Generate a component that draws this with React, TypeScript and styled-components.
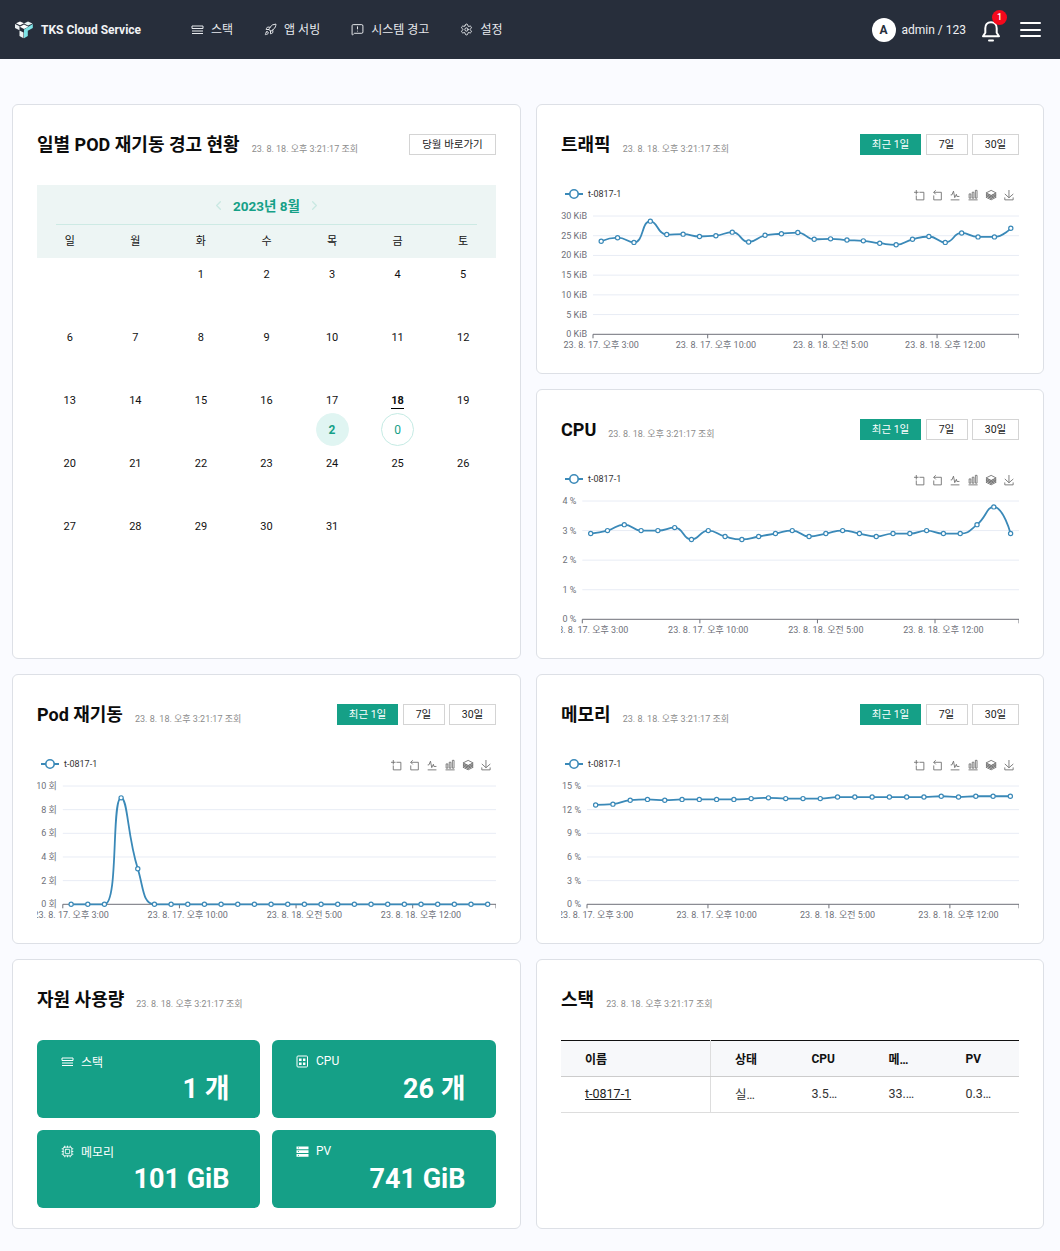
import React from 'react'
import styled, { createGlobalStyle } from 'styled-components'
import { Cpu, MessageSquareWarning, Rocket, Settings, ChevronLeft, ChevronRight } from 'lucide-react'

const TEAL = '#15a087'
const LINE = '#3a89b8'
const AXIS = '#6e7079'
const FONT = `Roboto, "Noto Sans CJK KR", "Noto Sans", sans-serif`
const VIEWED_AT = '23. 8. 18. 오후 3:21:17 조회'
const X_LABELS = ['23. 8. 17. 오후 3:00', '23. 8. 17. 오후 10:00', '23. 8. 18. 오전 5:00', '23. 8. 18. 오후 12:00']

const GlobalStyle = createGlobalStyle`
  html, body {
    margin: 0;
    padding: 0;
    background: #fafbff;
    font-family: ${FONT};
    color: #111;
  }
  * {
    box-sizing: border-box;
  }
`

// ---- chart (echarts 모양 그대로) ----

type Point = [number, number]

const smoothPath = (pts: Point[], smooth = 0.5) => {
  let d = `M${pts[0][0]},${pts[0][1]}`
  let cp0: Point = pts[0]
  const clamp = (v: number, a: number, b: number) => Math.max(Math.min(v, Math.max(a, b)), Math.min(a, b))
  pts.forEach((p, i) => {
    if (i === 0) return
    const prev = pts[i - 1]
    const next = pts[i + 1]
    if (!next) {
      d += `C${cp0[0]},${cp0[1]} ${p[0]},${p[1]} ${p[0]},${p[1]}`
      return
    }
    const lenPrev = Math.hypot(p[0] - prev[0], p[1] - prev[1])
    const lenNext = Math.hypot(next[0] - p[0], next[1] - p[1])
    const ratio = lenNext / (lenNext + lenPrev)
    let vx = next[0] - prev[0]
    let vy = next[1] - prev[1]
    let c1x = clamp(p[0] + vx * smooth * ratio, next[0], p[0])
    let c1y = clamp(p[1] + vy * smooth * ratio, next[1], p[1])
    vx = c1x - p[0]
    vy = c1y - p[1]
    const c0x = clamp(p[0] - (vx * lenPrev) / lenNext, prev[0], p[0])
    const c0y = clamp(p[1] - (vy * lenPrev) / lenNext, prev[1], p[1])
    vx = p[0] - c0x
    vy = p[1] - c0y
    c1x = p[0] + (vx * lenNext) / lenPrev
    c1y = p[1] + (vy * lenNext) / lenPrev
    d += `C${cp0[0]},${cp0[1]} ${c0x},${c0y} ${p[0]},${p[1]}`
    cp0 = [c1x, c1y]
  })
  return d
}

const TOOL_ICONS = [
  'M0,13.5h26.9 M13.5,26.9V0 M32.1,13.5H58V58H13.5 V32.1',
  'M22,1.4L9.9,13.5l12.3,12.3 M10.3,13.5H54.9v44.6 H10.3v-26',
  'M4.1,28.9h7.1l9.3-22l7.4,38l9.7-19.7l3,12.8h14.9M4.1,58h51.4',
  'M6.7,22.9h10V48h-10V22.9zM24.9,13h10v35h-10V13zM43.2,2h10v46h-10V2zM3.1,58h53.7',
  'M8.2,38.4l-8.4,4.1l30.6,15.3L60,42.5l-8.1-4.1l-21.5,11L8.2,38.4z M51.9,30l-8.1,4.2l-13.4,6.9l-13.9-6.9L8.2,30l-8.4,4.2l8.4,4.2l22.2,11l21.5-11l8.1-4.2L51.9,30z M51.9,21.7l-8.1,4.2L35.7,30l-5.3,2.8L24.9,30l-8.4-4.1l-8.3-4.2l-8.4,4.2L8.2,30l8.3,4.2l13.9,6.9l13.4-6.9l8.1-4.2l8.1-4.1L51.9,21.7zM30.4,2.2L-0.2,17.5l8.4,4.1l8.3,4.2l8.4,4.2l5.5,2.7l5.3-2.7l8.1-4.2l8.1-4.2l8.1-4.1L30.4,2.2z',
  'M4.7,22.9L29.3,45.5L54.7,23.4M4.6,43.6L4.6,58L53.8,58L53.8,43.6M29.2,45.1L29.2,0',
]

const CHART_TOP = 32
const CHART_BOTTOM = 150.3

type ChartProps = {
  width: number
  left: number
  max: number
  step: number
  unit: string
  data: number[]
}

const Chart = ({ width, left, max, step, unit, data }: ChartProps) => {
  const band = (width - left) / data.length
  const yOf = (v: number) => CHART_BOTTOM - (v / max) * (CHART_BOTTOM - CHART_TOP)
  const pts = data.map((v, i): Point => [left + band * (i + 0.5), yOf(v)])
  const ticks: number[] = []
  for (let v = 0; v <= max; v += step) ticks.push(v)

  return (
    <ChartSvg width={width} height={176} viewBox={`0 0 ${width} 176`}>
      <line x1={4} x2={22} y1={10} y2={10} stroke={LINE} strokeWidth={2} />
      <circle cx={13} cy={10} r={4.2} fill="#fff" stroke={LINE} strokeWidth={1.6} />
      <text x={27} y={13} fontSize={9} fill="#333">t-0817-1</text>
      {TOOL_ICONS.map((d, i) => (
        <path
          key={i}
          d={d}
          transform={`translate(${width - 105 + i * 18},6) scale(0.17)`}
          fill="none"
          stroke="#6a6a6a"
          strokeWidth={5}
        />
      ))}
      {ticks.map((v) => (
        <g key={v}>
          {v > 0 && <line x1={left} x2={width} y1={yOf(v)} y2={yOf(v)} stroke="#e8ecf5" />}
          <text x={left - 6} y={yOf(v) + 3} fontSize={9} fill={AXIS} textAnchor="end">
            {v} {unit}
          </text>
        </g>
      ))}
      <line x1={left} x2={width} y1={CHART_BOTTOM} y2={CHART_BOTTOM} stroke={AXIS} />
      {[0, 7, 14, 21, data.length].map((i) => (
        <line key={i} x1={left + band * i} x2={left + band * i} y1={CHART_BOTTOM} y2={CHART_BOTTOM + 4} stroke={AXIS} />
      ))}
      {X_LABELS.map((label, i) => (
        <text key={label} x={left + band * (i * 7 + 0.5)} y={CHART_BOTTOM + 14} fontSize={9} fill={AXIS} textAnchor="middle">
          {label}
        </text>
      ))}
      <path d={smoothPath(pts)} fill="none" stroke={LINE} strokeWidth={1.8} />
      {pts.map(([x, y], i) => (
        <circle key={i} cx={x} cy={y} r={2.1} fill="#fff" stroke={LINE} strokeWidth={1.2} />
      ))}
    </ChartSvg>
  )
}

// ---- icons ----

const StackIcon = () => (
  <svg width="13" height="13" viewBox="0 0 13 13" fill="none" stroke="currentColor" strokeWidth="1">
    <path d="M1 3h11M1 5.5h11M1 8h11M1 10.5h11" />
    <path d="M1 3v2.5M12 3v2.5" />
  </svg>
)

const CpuBoxIcon = () => (
  <svg width="13" height="13" viewBox="0 0 13 13" fill="none" stroke="currentColor" strokeWidth="1">
    <rect x="1" y="1" width="10.5" height="11" rx="1" />
    <path d="M3 3.5h2.6v2.5H3zM3 7.5h2.6V10H3zM7 3.5h2.4v2.5H7zM7 7.5h2.4V10H7z" fill="currentColor" stroke="none" />
  </svg>
)

const ServerIcon = () => (
  <svg width="13" height="13" viewBox="0 0 13 13" fill="currentColor">
    <path d="M0.5 1.5h12v2.8h-12zM0.5 5.2h12V8h-12zM0.5 8.9h12v2.8h-12z" />
    <path d="M2 2.5h1v.8H2zM2 6.2h1V7H2zM2 9.9h1v.8H2z" fill={TEAL} />
  </svg>
)

const Logo = () => (
  <svg width="20" height="20" viewBox="0 0 20 20">
    <path d="M6 1.5l4 1.8-4 2-4-2z" fill="#fff" />
    <path d="M14 1.5l4.5 2-4.5 2-4-2z" fill="#e8f4f4" />
    <path d="M1 4l4.5 2.2v4L1 8z" fill="#e9eef0" />
    <path d="M10 4.5l4.5 2.2L10 9 5.8 6.7z" fill="#fff" />
    <path d="M5.5 10.5l4 2v5.8l-4-2.2z" fill="#eef2f2" />
    <path d="M10 9.5v8.8l3.8-2.2v-5.4l5-2.6V4l-4 2.6z" fill="#7fe3e6" />
  </svg>
)

const Bell = () => (
  <svg width="22" height="24" viewBox="0 0 22 24" fill="none" stroke="#fff" strokeWidth="2" strokeLinejoin="round" strokeLinecap="round">
    <path d="M11 3.2c-3.8 0-5.7 2.8-5.7 6v4.6l-2.3 3.4h16l-2.3-3.4V9.2c0-3.2-1.9-6-5.7-6z" />
    <path d="M9 21.5h4" />
  </svg>
)

// ---- data ----

const TRAFFIC = [23.6, 24.5, 23.3, 28.7, 25.3, 25.4, 24.8, 25, 25.9, 23.4, 25.1, 25.5, 25.8, 24.1, 24.2, 23.9, 23.7, 23.1, 22.7, 24.1, 24.8, 23.3, 25.7, 24.7, 24.7, 26.9]
const CPU = [2.9, 3, 3.2, 3, 3, 3.1, 2.7, 3, 2.8, 2.7, 2.8, 2.9, 3, 2.8, 2.9, 3, 2.9, 2.8, 2.9, 2.9, 3, 2.9, 2.9, 3.2, 3.8, 2.9]
const POD = [0, 0, 0, 9, 3, 0, 0, 0, 0, 0, 0, 0, 0, 0, 0, 0, 0, 0, 0, 0, 0, 0, 0, 0, 0, 0]
const MEMORY = [12.6, 12.7, 13.2, 13.3, 13.2, 13.3, 13.3, 13.3, 13.3, 13.4, 13.5, 13.4, 13.4, 13.4, 13.6, 13.6, 13.6, 13.6, 13.6, 13.6, 13.7, 13.6, 13.7, 13.7, 13.7]

const NAV = [
  { label: '스택', icon: <StackIcon /> },
  { label: '앱 서빙', icon: <Rocket size={13} strokeWidth={1.8} /> },
  { label: '시스템 경고', icon: <MessageSquareWarning size={13} strokeWidth={1.8} /> },
  { label: '설정', icon: <Settings size={13} strokeWidth={1.8} /> },
]

const WEEKDAYS = ['일', '월', '화', '수', '목', '금', '토']
const CELLS: (number | null)[] = [null, null, ...Array.from({ length: 31 }, (_, i) => i + 1)]
const COUNTS: Record<number, { count: number; filled: boolean }> = {
  17: { count: 2, filled: true },
  18: { count: 0, filled: false },
}

const STATS = [
  { label: '스택', value: '1 개', icon: <StackIcon /> },
  { label: 'CPU', value: '26 개', icon: <CpuBoxIcon /> },
  { label: '메모리', value: '101 GiB', icon: <Cpu size={13} strokeWidth={1.6} /> },
  { label: 'PV', value: '741 GiB', icon: <ServerIcon /> },
]

const PeriodTabs = () => (
  <Tabs>
    <Tab $active $width={61}>최근 1일</Tab>
    <Tab $width={42}>7일</Tab>
    <Tab $width={47}>30일</Tab>
  </Tabs>
)

const CardHead = ({ title, children }: { title: string; children?: React.ReactNode }) => (
  <Head>
    <TitleGroup>
      <Title>{title}</Title>
      <Viewed>{VIEWED_AT}</Viewed>
    </TitleGroup>
    {children}
  </Head>
)

export default function App() {
  return (
    <>
      <GlobalStyle />
      <TopBar>
        <Brand>
          <Logo />
          <BrandName>TKS Cloud Service</BrandName>
        </Brand>
        <Nav>
          {NAV.map(({ label, icon }) => (
            <NavItem key={label}>
              {icon}
              <NavText>{label}</NavText>
            </NavItem>
          ))}
        </Nav>
        <UserArea>
          <Avatar>A</Avatar>
          <UserName>admin / 123</UserName>
          <BellWrap>
            <Bell />
            <Badge>1</Badge>
          </BellWrap>
          <Burger>
            <i />
            <i />
            <i />
          </Burger>
        </UserArea>
      </TopBar>
      <Main>
        <CalendarCard>
          <CardHead title="일별 POD 재기동 경고 현황">
            <GhostButton>당월 바로가기</GhostButton>
          </CardHead>
          <CalendarHead>
            <MonthRow>
              <ChevronLeft size={15} color="#c9e8e2" />
              <MonthLabel>2023년 8월</MonthLabel>
              <ChevronRight size={15} color="#c9e8e2" />
            </MonthRow>
            <WeekRow>
              {WEEKDAYS.map((d) => (
                <span key={d}>{d}</span>
              ))}
            </WeekRow>
          </CalendarHead>
          <DayGrid>
            {CELLS.map((day, i) => (
              <DayCell key={i}>
                {day && <DayNumber $today={day === 18}>{day}</DayNumber>}
                {day && COUNTS[day] && <CountCircle $filled={COUNTS[day].filled}>{COUNTS[day].count}</CountCircle>}
              </DayCell>
            ))}
          </DayGrid>
        </CalendarCard>

        <Card>
          <CardHead title="트래픽">
            <PeriodTabs />
          </CardHead>
          <Chart width={458} left={32} max={30} step={5} unit="KiB" data={TRAFFIC} />
        </Card>

        <Card>
          <CardHead title="CPU">
            <PeriodTabs />
          </CardHead>
          <Chart width={458} left={21.3} max={4} step={1} unit="%" data={CPU} />
        </Card>

        <Card>
          <CardHead title="Pod 재기동">
            <PeriodTabs />
          </CardHead>
          <Chart width={459} left={25.8} max={10} step={2} unit="회" data={POD} />
        </Card>

        <Card>
          <CardHead title="메모리">
            <PeriodTabs />
          </CardHead>
          <Chart width={458} left={26} max={15} step={3} unit="%" data={MEMORY} />
        </Card>

        <Card>
          <CardHead title="자원 사용량" />
          <StatGrid>
            {STATS.map(({ label, value, icon }) => (
              <StatCard key={label}>
                <StatLabel>
                  {icon}
                  {label}
                </StatLabel>
                <StatValue>{value}</StatValue>
              </StatCard>
            ))}
          </StatGrid>
        </Card>

        <Card>
          <CardHead title="스택" />
          <StackTable>
            <colgroup>
              <col width={149.5} />
              <col width={77} />
              <col width={77} />
              <col width={77} />
              <col width={77.5} />
            </colgroup>
            <thead>
              <tr>
                <th>이름</th>
                <th>상태</th>
                <th>CPU</th>
                <th>메모리</th>
                <th>PV</th>
              </tr>
            </thead>
            <tbody>
              <tr>
                <td>
                  <StackLink>t-0817-1</StackLink>
                </td>
                <td>실행 중</td>
                <td>3.52 %</td>
                <td>33.41 %</td>
                <td>0.32 %</td>
              </tr>
            </tbody>
          </StackTable>
        </Card>
      </Main>
    </>
  )
}

const TopBar = styled.header`
  display: flex;
  align-items: center;
  height: 59px;
  padding: 0 19px 0 14px;
  background: #272e3b;
  color: #e8eaee;
`

const Brand = styled.div`
  display: flex;
  align-items: center;
  gap: 7px;
  width: 177px;
`

const BrandName = styled.span`
  font-size: 12px;
  font-weight: 700;
  color: #f2f3f5;
  white-space: nowrap;
`

const Nav = styled.nav`
  display: flex;
  gap: 31px;
`

const NavItem = styled.a`
  display: flex;
  align-items: center;
  gap: 7px;
  font-size: 12px;
  white-space: nowrap;
`

const NavText = styled.span`
  margin-top: -3px;
`

const UserArea = styled.div`
  display: flex;
  align-items: center;
  margin-left: auto;
`

const Avatar = styled.div`
  display: flex;
  align-items: center;
  justify-content: center;
  width: 24px;
  height: 24px;
  border-radius: 50%;
  background: #fff;
  color: #272e3b;
  font-size: 12px;
  font-weight: 700;
`

const UserName = styled.span`
  margin-left: 6px;
  font-size: 12px;
  color: #f0f1f3;
  white-space: nowrap;
`

const BellWrap = styled.div`
  position: relative;
  display: flex;
  margin-left: 14px;
  padding-top: 2px;
`

const Badge = styled.span`
  position: absolute;
  top: -7px;
  right: -5px;
  display: flex;
  align-items: center;
  justify-content: center;
  width: 15px;
  height: 15px;
  border-radius: 50%;
  background: #f5091c;
  color: #fff;
  font-size: 9px;
  font-weight: 500;
`

const Burger = styled.div`
  display: flex;
  flex-direction: column;
  gap: 4.5px;
  width: 21px;
  margin-left: 18px;

  i {
    display: block;
    height: 2px;
    border-radius: 1px;
    background: #fff;
  }
`

const Main = styled.main`
  display: grid;
  grid-template-columns: 509px 508px;
  grid-auto-rows: 270px;
  column-gap: 15px;
  row-gap: 15px;
  padding: 45px 16px 22px 12px;
`

const Card = styled.section`
  min-width: 0;
  padding: 29px 24px 0;
  border: 1px solid #dde0e6;
  border-radius: 6px;
  background: #fff;
  overflow: hidden;
`

const CalendarCard = styled(Card)`
  grid-row: span 2;
`

const Head = styled.div`
  display: flex;
  align-items: center;
  justify-content: space-between;
  height: 21px;
  margin-bottom: 30px;
`

const TitleGroup = styled.div`
  display: flex;
  align-items: flex-start;
  gap: 12px;
`

const Title = styled.h2`
  margin: 0;
  font-size: 18px;
  font-weight: 700;
  line-height: 20px;
  color: #0c0c0c;
  white-space: nowrap;
`

const Viewed = styled.span`
  margin-top: 9px;
  font-size: 9px;
  line-height: 11px;
  color: #8c8c8c;
  white-space: nowrap;
`

const Tabs = styled.div`
  display: flex;
  gap: 4.5px;
`

const Tab = styled.button<{ $active?: boolean; $width: number }>`
  width: ${({ $width }) => $width}px;
  height: 21px;
  padding: 0 0 2px;
  border: 1px solid ${({ $active }) => ($active ? TEAL : '#d4d4d4')};
  background: ${({ $active }) => ($active ? TEAL : '#fff')};
  color: ${({ $active }) => ($active ? '#fff' : '#222')};
  font-family: ${FONT};
  font-size: 10.5px;
`

const GhostButton = styled.button`
  width: 87px;
  height: 21px;
  padding: 0 0 2px;
  border: 1px solid #d4d4d4;
  background: #fff;
  color: #222;
  font-family: ${FONT};
  font-size: 10.5px;
`

const ChartSvg = styled.svg`
  display: block;
  margin-top: -1px;
  overflow: hidden;
  font-family: ${FONT};
`

const CalendarHead = styled.div`
  height: 73px;
  padding: 0 19px;
  background: #edf5f4;
`

const MonthRow = styled.div`
  display: flex;
  align-items: center;
  justify-content: center;
  gap: 7px;
  height: 40px;
  padding-top: 1px;
  border-bottom: 1px solid #cdeae4;
`

const MonthLabel = styled.strong`
  font-size: 13.5px;
  font-weight: 700;
  color: ${TEAL};
`

const WeekRow = styled.div`
  display: grid;
  grid-template-columns: repeat(7, 65.57px);
  margin: 0 -19px;
  padding-top: 7px;
  font-size: 11px;
  text-align: center;
`

const DayGrid = styled.div`
  display: grid;
  grid-template-columns: repeat(7, 1fr);
  grid-auto-rows: 63px;
`

const DayCell = styled.div`
  display: flex;
  flex-direction: column;
  align-items: center;
  padding-top: 10px;
  font-size: 11px;
`

const DayNumber = styled.span<{ $today: boolean }>`
  height: 15px;
  line-height: 14px;
  font-weight: ${({ $today }) => ($today ? 700 : 400)};
  border-bottom: ${({ $today }) => ($today ? '1px solid #000' : 'none')};
`

const CountCircle = styled.div<{ $filled: boolean }>`
  display: flex;
  align-items: center;
  justify-content: center;
  width: 33px;
  height: 33px;
  margin-top: 4px;
  border: 1px solid ${({ $filled }) => ($filled ? '#e0f5f2' : '#c5ebe4')};
  border-radius: 50%;
  background: ${({ $filled }) => ($filled ? '#e0f5f2' : '#fff')};
  color: ${TEAL};
  font-size: 12px;
  font-weight: ${({ $filled }) => ($filled ? 700 : 400)};
`

const StatGrid = styled.div`
  display: grid;
  grid-template-columns: 223px 224px;
  grid-auto-rows: 78px;
  gap: 12px;
`

const StatCard = styled.div`
  padding: 13px 30.5px 0 24px;
  border-radius: 6px;
  background: ${TEAL};
  color: #fff;
`

const StatLabel = styled.div`
  display: flex;
  align-items: center;
  gap: 7px;
  height: 16px;
  font-size: 12px;
`

const StatValue = styled.div`
  margin-top: 2px;
  font-size: 27px;
  font-weight: 700;
  line-height: 36px;
  text-align: right;
`

const StackTable = styled.table`
  width: 100%;
  table-layout: fixed;
  border-collapse: collapse;
  border-top: 1px solid #111;
  font-size: 12.5px;

  th,
  td {
    height: 36px;
    padding: 0 24px;
    overflow: hidden;
    text-align: left;
    text-overflow: ellipsis;
    white-space: nowrap;
  }

  th {
    background: #f7f8fa;
    border-bottom: 1px solid #ccc;
    font-size: 12px;
    font-weight: 700;
  }

  td {
    padding-bottom: 2px;
    border-bottom: 1px solid #ddd;
    color: #333;
  }

  th:first-child,
  td:first-child {
    border-right: 1px solid #ddd;
  }
`

const StackLink = styled.a`
  color: #222;
  text-decoration: underline;
`
